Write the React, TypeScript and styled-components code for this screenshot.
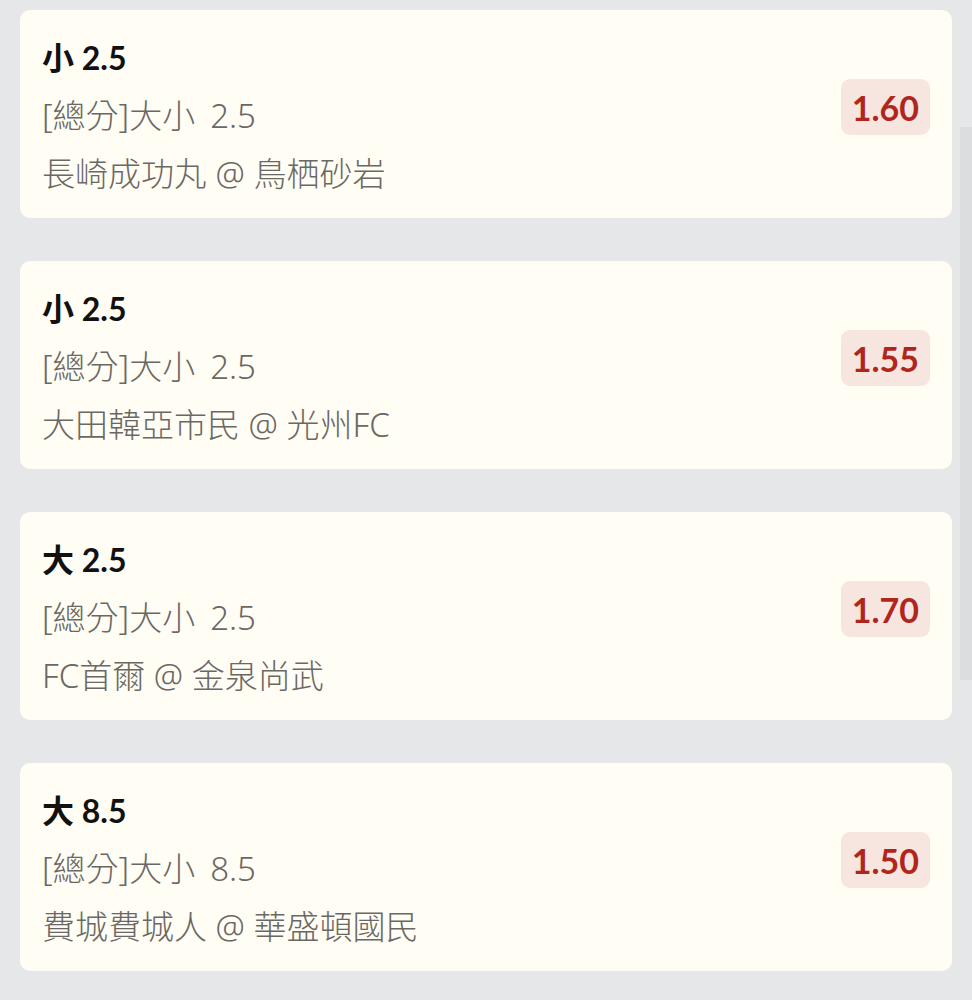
import styled, { createGlobalStyle } from 'styled-components';

interface IBet {
    pick: string
    market: string
    line: string
    match: string
    odds: string
}

const bets: IBet[] = [
    {pick: '小 2.5', market: '[總分]大小', line: '2.5', match: '長崎成功丸 @ 鳥栖砂岩', odds: '1.60'},
    {pick: '小 2.5', market: '[總分]大小', line: '2.5', match: '大田韓亞市民 @ 光州FC', odds: '1.55'},
    {pick: '大 2.5', market: '[總分]大小', line: '2.5', match: 'FC首爾 @ 金泉尚武', odds: '1.70'},
    {pick: '大 8.5', market: '[總分]大小', line: '8.5', match: '費城費城人 @ 華盛頓國民', odds: '1.50'},
]

const GlobalStyle = createGlobalStyle`
    html, body {
        margin: 0;
        padding: 0;
        background: #e6e7e9;
    }
    body {
        font-family: Lato, "Noto Sans CJK TC", sans-serif;
    }
`

const Page = styled.div`
    position: relative;
    display: flex;
    flex-direction: column;
    gap: 43px;
    padding: 10px 20px 28px 20px;
    min-height: 1000px;
    box-sizing: border-box;
`

const Card = styled.div`
    display: flex;
    align-items: flex-start;
    justify-content: space-between;
    height: 208px;
    box-sizing: border-box;
    padding: 19px 22px 15px 22px;
    background: #fffdf4;
    border-radius: 10px;
`

const Info = styled.div`
    display: flex;
    flex-direction: column;
`

const Pick = styled.div`
    font-family: Lato, "Noto Sans CJK TC", sans-serif;
    font-weight: 700;
    font-size: 32px;
    line-height: 58px;
    color: #111111;
`

const Detail = styled.div`
    font-family: "Noto Sans", "Noto Sans CJK TC", sans-serif;
    font-weight: 300;
    font-size: 33px;
    line-height: 58px;
    color: #6a6864;
`

const Line = styled.span`
    margin-left: 15px;
`

const Odds = styled.div`
    margin-top: 50px;
    height: 56px;
    padding: 0 11px;
    display: flex;
    align-items: center;
    border-radius: 9px;
    background: #f7e6df;
    color: #b0261d;
    font-family: Lato, sans-serif;
    font-weight: 700;
    font-size: 34px;
`

const ScrollThumb = styled.div`
    position: absolute;
    right: 0;
    top: 127px;
    width: 12px;
    height: 553px;
    background: #dcdddf;
`

const App = () => {
    return (
        <>
            <GlobalStyle />
            <Page>
                {bets.map((bet, i) => (
                    <Card key={i}>
                        <Info>
                            <Pick>{bet.pick}</Pick>
                            <Detail>{bet.market}<Line>{bet.line}</Line></Detail>
                            <Detail>{bet.match}</Detail>
                        </Info>
                        <Odds>{bet.odds}</Odds>
                    </Card>
                ))}
                <ScrollThumb />
            </Page>
        </>
    )
}

export default App
